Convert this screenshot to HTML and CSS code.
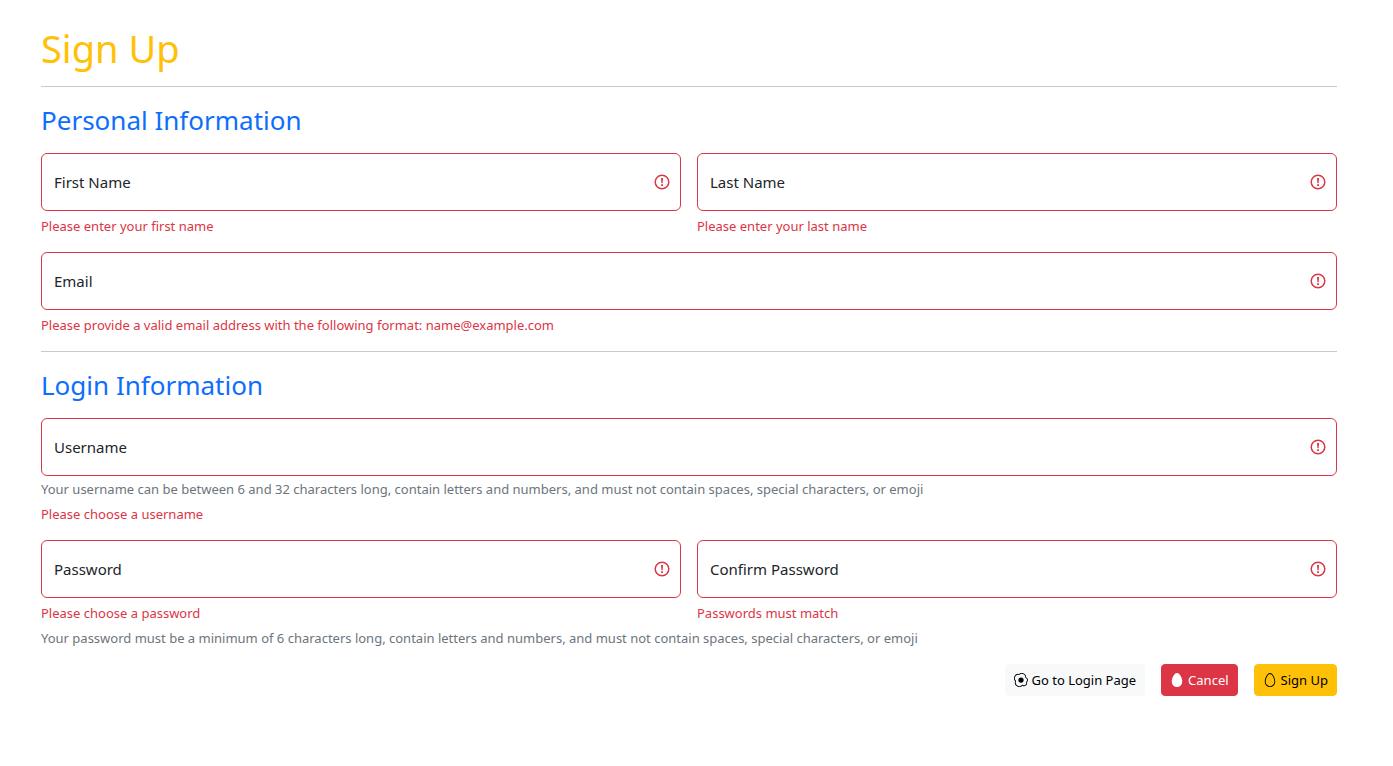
FILE: index.html
```html
<!DOCTYPE html>
<html lang="en">
<head>
<meta charset="utf-8">
<meta name="viewport" content="width=device-width, initial-scale=1">
<title>Sign Up</title>
<link rel="stylesheet" href="styles.css">
</head>
<body>
<svg class="sprite" aria-hidden="true">
  <symbol id="alert" viewBox="0 0 16 16"><circle cx="8" cy="8" r="6.8" fill="none" stroke="currentColor" stroke-width="1.5"/><path d="M7 4h2L8.600 9.200H7.400zM7.100 10.200h1.800v1.800H7.100z" fill="currentColor"/></symbol>
</svg>
<main class="page">
  <h1 class="title">Sign Up</h1>
  <hr class="rule">
  <form class="form" novalidate>
    <h2 class="heading">Personal Information</h2>
    <div class="row">
      <div class="group">
        <div class="field">
          <input class="input" type="text" id="first">
          <label class="label" for="first">First Name</label>
          <svg class="alert"><use href="#alert"/></svg>
        </div>
        <p class="error">Please enter your first name</p>
      </div>
      <div class="group">
        <div class="field">
          <input class="input" type="text" id="last">
          <label class="label" for="last">Last Name</label>
          <svg class="alert"><use href="#alert"/></svg>
        </div>
        <p class="error">Please enter your last name</p>
      </div>
    </div>
    <div class="group">
      <div class="field">
        <input class="input" type="email" id="email">
        <label class="label" for="email">Email</label>
        <svg class="alert"><use href="#alert"/></svg>
      </div>
      <p class="error">Please provide a valid email address with the following format: name@example.com</p>
    </div>
    <hr class="rule">
    <h2 class="heading">Login Information</h2>
    <div class="group spaced">
      <div class="field">
        <input class="input" type="text" id="username">
        <label class="label" for="username">Username</label>
        <svg class="alert"><use href="#alert"/></svg>
      </div>
      <p class="hint close">Your username can be between 6 and 32 characters long, contain letters and numbers, and must not contain spaces, special characters, or emoji</p>
      <p class="error">Please choose a username</p>
    </div>
    <div class="row last">
      <div class="group">
        <div class="field">
          <input class="input" type="password" id="password">
          <label class="label" for="password">Password</label>
          <svg class="alert"><use href="#alert"/></svg>
        </div>
        <p class="error">Please choose a password</p>
      </div>
      <div class="group">
        <div class="field">
          <input class="input" type="password" id="confirm">
          <label class="label" for="confirm">Confirm Password</label>
          <svg class="alert"><use href="#alert"/></svg>
        </div>
        <p class="error">Passwords must match</p>
      </div>
    </div>
    <p class="hint">Your password must be a minimum of 6 characters long, contain letters and numbers, and must not contain spaces, special characters, or emoji</p>
    <div class="actions">
      <button class="button light" type="button">
        <svg class="icon" viewBox="0 0 16 16"><path d="M8 11a3 3 0 1 0 0-6 3 3 0 0 0 0 6"/><path d="M13.997 5.17a5 5 0 0 0-8.101-4.090A5 5 0 0 0 1.280 9.342a5 5 0 0 0 8.336 5.109 3.500 3.500 0 0 0 5.201-4.065 3.001 3.001 0 0 0-.822-5.216zm-1-.034a1 1 0 0 0 .668.977 2.001 2.001 0 0 1 .547 3.478 1 1 0 0 0-.341 1.113 2.500 2.500 0 0 1-3.715 2.905 1 1 0 0 0-1.262.152 4 4 0 0 1-6.670-4.087 1 1 0 0 0-.2-1 4 4 0 0 1 3.693-6.610 1 1 0 0 0 .8-.2 4 4 0 0 1 6.480 3.273z"/></svg>
        Go to Login Page
      </button>
      <button class="button danger" type="button">
        <svg class="icon" viewBox="0 0 16 16"><path d="M14 10a6 6 0 0 1-12 0C2 5.686 5 0 8 0s6 5.686 6 10"/></svg>
        Cancel
      </button>
      <button class="button warning" type="submit">
        <svg class="icon" viewBox="0 0 16 16"><path d="M8 15a5 5 0 0 1-5-5c0-1.956.69-4.286 1.742-6.120.524-.913 1.112-1.658 1.704-2.164C7.044 1.206 7.572 1 8 1c.428 0 .956.206 1.554.716.592.506 1.180 1.251 1.704 2.164C12.310 5.714 13 8.044 13 10a5 5 0 0 1-5 5m0 1a6 6 0 0 0 6-6c0-4.314-3-10-6-10S2 5.686 2 10a6 6 0 0 0 6 6"/></svg>
        Sign Up
      </button>
    </div>
  </form>
</main>
</body>
</html>
```
FILE: styles.css
```css
* { box-sizing: border-box; }
body {
  margin: 0;
  background: #fff;
  color: #212529;
  font-family: "Noto Sans", "Open Sans", sans-serif;
}
.sprite { display: none; }
.page { padding: 24px 56px 40px 41px; }
.title {
  margin: 0;
  color: #ffc107;
  font-size: 38px;
  font-weight: 400;
  line-height: 48px;
}
.rule {
  margin: 16px 0;
  border: 0;
  border-top: 1px solid #c8c9ca;
}
.title + .rule { margin-top: 14px; }
.heading {
  margin: 0 0 16px;
  color: #0d6efd;
  font-size: 26px;
  font-weight: 400;
  line-height: 34px;
}
.row {
  display: grid;
  grid-template-columns: 1fr 1fr;
  gap: 16px;
  margin-bottom: 16px;
}
.row.last { margin-bottom: 0; }
.spaced { margin-bottom: 16px; }
.field {
  display: grid;
  align-items: center;
}
.field > * { grid-area: 1 / 1; }
.input {
  width: 100%;
  height: 58px;
  padding: 16px 40px 16px 12px;
  border: 1px solid #dc3545;
  border-radius: 6px;
  background: #fff;
  font: inherit;
  font-size: 15px;
}
.label {
  justify-self: start;
  padding-left: 13px;
  font-size: 15px;
  line-height: 24px;
}
.alert {
  justify-self: end;
  width: 16px;
  height: 16px;
  margin-right: 11px;
  color: #dc3545;
}
.error, .hint {
  margin: 6px 0 0;
  font-size: 13px;
  line-height: 19px;
}
.error { color: #dc3545; }
.hint { color: #6c757d; }
.close { margin-top: 4px; }
.actions {
  display: flex;
  flex-wrap: wrap;
  justify-content: flex-end;
  gap: 16px;
  margin-top: 16px;
}
.button {
  display: flex;
  align-items: center;
  gap: 4px;
  height: 32px;
  padding: 0 8px;
  border: 1px solid;
  border-radius: 4px;
  font: inherit;
  font-size: 13px;
  line-height: 21px;
}
.icon {
  width: 14px;
  height: 14px;
  fill: currentColor;
}
.light { border-color: #f8f9fa; background: #f8f9fa; color: #000; }
.danger { border-color: #dc3545; background: #dc3545; color: #fff; }
.warning { border-color: #ffc107; background: #ffc107; color: #000; }
```
